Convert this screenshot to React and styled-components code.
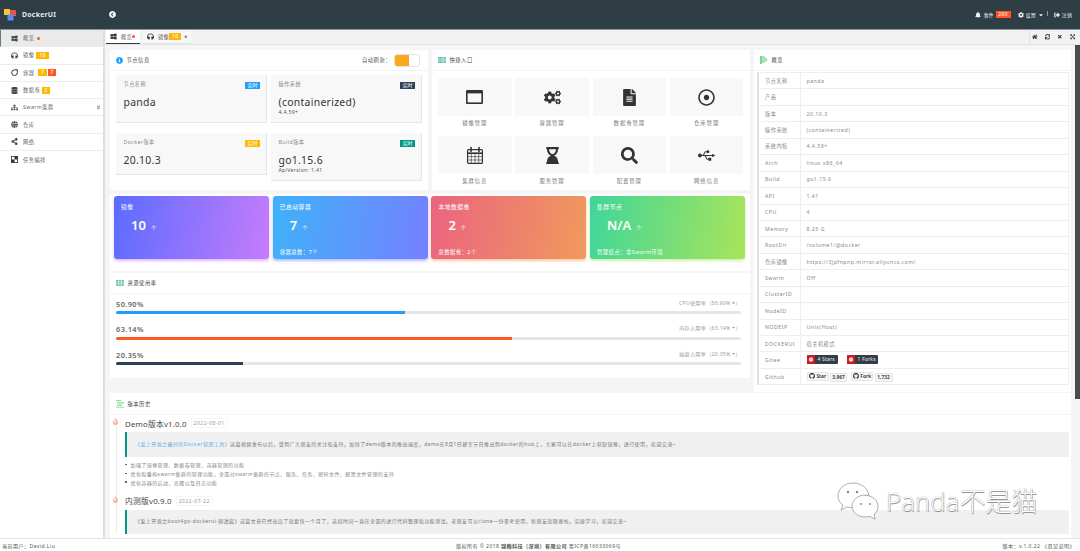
import React from "react";
import styled, { createGlobalStyle } from "styled-components";
import {
  FaWindows, FaHeadphones, FaDatabase, FaSitemap, FaGlobe, FaShareAlt, FaChevronCircleLeft, FaBell,
  FaCog, FaCaretDown, FaHome, FaSync, FaTimes, FaExpandArrowsAlt, FaInfoCircle,
  FaCogs, FaFileAlt, FaRegDotCircle, FaHourglassEnd, FaSearch, FaUsb, FaGithub,
  FaAngleDoubleDown, FaCaretUp, FaSignOutAlt, FaFire,
} from "react-icons/fa";

const FONT = `"Noto Sans", "Noto Sans CJK SC", sans-serif`;

const GlobalStyle = createGlobalStyle`
  html, body {
    margin: 0;
    padding: 0;
    height: 100%;
    overflow: hidden;
    background: #f5f5f5;
    font-family: ${FONT};
  }
  * { box-sizing: border-box; }
`;

const Page = styled.div`
  width: 1080px;
  height: 551px;
  display: flex;
  flex-direction: column;
  overflow: hidden;
  position: relative;
`;

const TopBar = styled.header`
  height: 30px;
  flex: none;
  background: #2f3d45;
  border-bottom: 1px solid #8b979c;
  display: flex;
  align-items: center;
  color: #fff;
`;
const Brand = styled.div`
  width: 109px;
  padding-left: 4px;
  display: flex;
  align-items: center;
  gap: 6px;
  font-size: 6.8px;
  font-weight: 700;
  letter-spacing: 0.3px;
  color: #e8ecee;
`;
const BackButton = styled.span`
  display: flex;
  font-size: 7px;
  color: #fff;
`;
const TopActions = styled.div`
  margin-left: auto;
  padding-right: 8px;
  display: flex;
  align-items: center;
  font-size: 5px;
  letter-spacing: 0.1px;
  color: #eef1f2;
`;
const TopAction = styled.span`
  display: flex;
  align-items: center;
  gap: 2px;
  margin-left: ${(p) => p.$gap || 0}px;
  svg { font-size: 6px; }
`;
const TopBadge = styled.span`
  background: #ff5722;
  color: #fff;
  width: 15px;
  text-align: center;
  line-height: 7px;
  height: 7px;
  font-size: 5px;
  letter-spacing: 0.4px;
`;
const TopSep = styled.span`
  width: 1px;
  height: 5px;
  background: #8b979c;
  margin: 0 5px 2px 3px;
`;

const Body = styled.div`
  flex: 1;
  min-height: 0;
  display: flex;
`;

const Sidebar = styled.nav`
  width: 105px;
  flex: none;
  background: #fff;
  border-right: 2px solid #dedede;
`;
const SideItem = styled.div`
  height: 17.3px;
  display: flex;
  align-items: center;
  padding-left: 10px;
  font-size: 5.2px;
  letter-spacing: 0.5px;
  color: #666;
  background: ${(p) => (p.$active ? "#e9eaea" : "#fff")};
  border-bottom: ${(p) => (p.$plain ? "none" : "1px solid #ececec")};
  border-left: 1px solid ${(p) => (p.$active ? "#6f7a80" : "transparent")};
`;
const SideIcon = styled.span`
  width: 12px;
  display: flex;
  font-size: 7px;
  color: #444;
`;
const Arrow = styled.span`
  margin-left: auto;
  margin-right: 2px;
  display: flex;
  font-size: 5px;
  color: #888;
`;
const Dot = styled.i`
  display: inline-block;
  width: 3px;
  height: 3px;
  border-radius: 50%;
  background: #ff5722;
  margin-left: ${(p) => p.$gap ?? 2}px;
`;
const Badge = styled.b`
  display: inline-block;
  font-weight: 500;
  font-size: 5px;
  line-height: 7px;
  height: 7px;
  padding: 0 ${(p) => (p.$wide ? 3 : 2.5)}px;
  margin-left: ${(p) => p.$gap ?? 2}px;
  color: #fff;
  background: ${(p) => p.$color || "#ffb800"};
`;

const Main = styled.div`
  flex: 1;
  min-width: 0;
  display: flex;
  flex-direction: column;
`;
const TabBar = styled.div`
  height: 15px;
  flex: none;
  background: #f2f2f2;
  border-bottom: 1px solid #e4e4e4;
  display: flex;
  align-items: flex-end;
  padding-left: 1px;
  gap: 3px;
`;
const Tab = styled.div`
  height: 14px;
  display: flex;
  align-items: center;
  padding: 0 ${(p) => (p.$active ? 5 : 3)}px 0 4px;
  font-size: 5.2px;
  letter-spacing: 0.3px;
  color: #666;
  background: ${(p) => (p.$active ? "#fff" : "#f7f7f7")};
  border-bottom: 1px solid ${(p) => (p.$active ? "#2f3d45" : "#e4e4e4")};
  svg { font-size: 7px; margin-right: 4px; color: #333; }
`;
const TabClose = styled.span`
  display: flex;
  margin-left: 3px;
  svg { font-size: 3.5px; margin: 0; color: #555; }
`;
const TabTools = styled.div`
  margin-left: auto;
  height: 100%;
  width: 51px;
  display: flex;
  align-items: center;
  justify-content: space-between;
  padding: 0 5px 0 2px;
  border-left: 1px solid #e2e2e2;
  font-size: 5.5px;
  color: #333;
`;

const ContentRow = styled.div`
  flex: 1;
  min-height: 0;
  display: flex;
`;
const Content = styled.div`
  flex: 1;
  min-width: 0;
  overflow: hidden;
  padding: 5px 4px 0 5px;
  background: #f5f5f5;
`;
const TrackBar = styled.div`
  width: 5px;
  flex: none;
  background: #f4f4f4;
`;
const Thumb = styled.div`
  height: 354px;
  background: #4c4c4c;
`;

const TopGrid = styled.div`
  display: grid;
  grid-template-columns: 640px 317px;
  column-gap: 4px;
  align-items: start;
`;
const LeftColumn = styled.div`
  display: flex;
  flex-direction: column;
  gap: 2px;
`;
const PanelPair = styled.div`
  display: grid;
  grid-template-columns: 318px 318px;
  gap: 4px;
  margin-bottom: 2px;
`;
const Panel = styled.section`
  background: #fff;
  height: ${(p) => p.$height}px;
  overflow: hidden;
`;
const PanelHead = styled.div`
  height: ${(p) => p.$height || 21}px;
  border-bottom: 1px solid #f4f4f4;
  padding: 0 6px;
  display: flex;
  align-items: center;
  gap: 3.5px;
  font-size: 5.3px;
  letter-spacing: 0.5px;
  color: #444;
`;
const HeadIcon = styled.span`
  display: flex;
  font-size: 7px;
  color: ${(p) => p.$color || "#5fc0ad"};
`;
const Refresh = styled.span`
  margin-left: auto;
  margin-right: 2px;
  display: flex;
  align-items: center;
  gap: 3px;
  color: #555;
`;
const Switch = styled.div`
  width: 26px;
  height: 13px;
  border: 1px solid #e3e3e3;
  border-radius: 3px;
  overflow: hidden;
  background: #fff;
  &::before {
    content: "";
    display: block;
    width: 14px;
    height: 100%;
    background: #fba81c;
  }
`;

const InfoGrid = styled.div`
  display: grid;
  grid-template-columns: 151px 151px;
  column-gap: 4px;
  row-gap: 9.5px;
  padding: 4px 6px 0;
  align-items: start;
`;
const InfoCard = styled.div`
  position: relative;
  height: ${(p) => p.$height}px;
  background: #f8f8f8;
  border-right: 1px solid #e5e5e5;
  border-bottom: 1px solid #e5e5e5;
  padding: 5px 7.5px;
`;
const InfoLabel = styled.div`
  font-size: 5.2px;
  line-height: 8px;
  letter-spacing: 0.45px;
  color: #888;
`;
const InfoValue = styled.div`
  margin-top: 7px;
  font-size: 10.4px;
  line-height: 14px;
  letter-spacing: 0.3px;
  color: #333;
`;
const InfoNote = styled.div`
  font-size: 5.2px;
  line-height: 6px;
  letter-spacing: 0.3px;
  color: #555;
`;
const Tag = styled.span`
  position: absolute;
  top: 7px;
  right: 6px;
  width: 15px;
  text-align: center;
  height: 7px;
  line-height: 7px;
  font-size: 5px;
  color: #fff;
  background: ${(p) => p.$color};
`;

const QuickGrid = styled.div`
  display: grid;
  grid-template-columns: repeat(4, 73.5px);
  column-gap: 3.8px;
  padding: 7px 6px 0;
`;
const QuickItem = styled.div`
  text-align: center;
  height: 58px;
`;
const QuickTile = styled.div`
  height: 38px;
  background: #f8f8f8;
  display: flex;
  align-items: center;
  justify-content: center;
  font-size: 17px;
  color: #333;
`;
const QuickLabel = styled.div`
  margin-top: 2px;
  font-size: 5.4px;
  line-height: 10px;
  letter-spacing: 0.9px;
  color: #777;
`;

const StatPanel = styled.div`
  background: #fff;
  height: 77px;
  padding: 2px 5px 0 4px;
  display: grid;
  grid-template-columns: repeat(4, 155px);
  column-gap: 3.7px;
`;
const StatCard = styled.div`
  height: 63px;
  border-radius: 3px;
  padding: 7px 7px 3px;
  color: #fff;
  display: flex;
  flex-direction: column;
  background: linear-gradient(100deg, ${(p) => p.$from}, ${(p) => p.$to});
  box-shadow: 0 2px 3px ${(p) => p.$to}88;
`;
const StatTitle = styled.div`
  font-size: 5.8px;
  line-height: 8px;
  letter-spacing: 0.5px;
`;
const StatValue = styled.div`
  margin: 5.5px 0 0 10px;
  display: flex;
  align-items: baseline;
  gap: 5px;
  font-size: 13px;
  line-height: 17px;
  font-weight: 600;
  small {
    font-size: 5.2px;
    font-weight: 400;
  }
`;
const StatNote = styled.div`
  margin-top: auto;
  font-size: 5.3px;
  line-height: 8px;
  letter-spacing: 0.5px;
`;

const UsageList = styled.div`
  padding: 2px 9px 0 6px;
`;
const UsageRow = styled.div`
  height: 25.5px;
`;
const UsageHead = styled.div`
  display: flex;
  justify-content: space-between;
  align-items: center;
  height: 15px;
`;
const UsagePct = styled.b`
  font-size: 7.4px;
  letter-spacing: 0.4px;
  font-weight: 600;
  color: #666;
`;
const UsageNote = styled.span`
  display: flex;
  align-items: center;
  margin-top: -3px;
  font-size: 5.1px;
  letter-spacing: 0.3px;
  color: #999;
  svg { font-size: 5px; }
`;
const UsageTrack = styled.div`
  height: 3px;
  border-radius: 2px;
  overflow: hidden;
  background: #e6e6e6;
`;
const UsageFill = styled.div`
  height: 100%;
  background: ${(p) => p.$color};
`;

const InfoTable = styled.table`
  width: 312px;
  margin: 1px 0 0 3px;
  border-collapse: collapse;
  border-left: 2px solid #e0e0e0;
  table-layout: fixed;
  td {
    height: 16.45px;
    padding: 0 0 0 6px;
    border: 1px solid #eeeeee;
    font-size: 5.2px;
    letter-spacing: 0.5px;
    color: #888;
    white-space: nowrap;
    overflow: hidden;
  }
  td:first-child { width: 42px; }
`;
const Shield = styled.span`
  display: inline-flex;
  align-items: center;
  width: 31px;
  height: 9px;
  margin-right: 9px;
  border-radius: 1px;
  overflow: hidden;
  font-size: 5px;
  color: #eee;
  background: #333d47;
  letter-spacing: 0.2px;
  &::before {
    content: "";
    width: 8px;
    height: 9px;
    margin-right: 3px;
    background: radial-gradient(circle, #f5c5c8 0 1.8px, #c71d23 2.6px);
  }
`;
const GhButton = styled.span`
  display: inline-flex;
  align-items: center;
  justify-content: center;
  gap: 1.5px;
  width: ${(p) => p.$width}px;
  height: 9px;
  margin-right: ${(p) => p.$gap ?? 1.5}px;
  border: 1px solid #e5e5e5;
  border-radius: 1px;
  background: #f6f6f6;
  font-size: 4.8px;
  font-weight: 700;
  color: #444;
  letter-spacing: 0;
  svg { font-size: 6px; color: #222; }
`;

const HistoryPanel = styled(Panel)`
  margin-top: 1px;
`;
const Timeline = styled.div`
  position: relative;
  padding: 0 2px 0 15px;
  &::before {
    content: "";
    position: absolute;
    left: 6px;
    top: 8px;
    bottom: 0;
    width: 1px;
    background: #ececec;
  }
`;
const Release = styled.div`
  position: relative;
  margin-bottom: ${(p) => p.$gap || 0}px;
`;
const FireMark = styled.span`
  position: absolute;
  left: -13px;
  top: 3px;
  display: flex;
  font-size: 7px;
  color: #fab5a4;
  background: #fff;
`;
const ReleaseHead = styled.div`
  height: 16px;
  display: flex;
  align-items: center;
  gap: 4px;
`;
const ReleaseName = styled.span`
  font-size: 7.8px;
  letter-spacing: 0.2px;
  color: #444;
`;
const ReleaseDate = styled.span`
  font-size: 5px;
  letter-spacing: 0.5px;
  color: #999;
  padding: 1px 2px;
  border: 1px solid #f6f6f6;
`;
const Quote = styled.div`
  margin-top: 1px;
  height: 24.5px;
  background: #f0f0f0;
  border-left: 2px solid #009688;
  padding: 0 8px 2px;
  display: flex;
  align-items: center;
  font-size: 5px;
  letter-spacing: 0.42px;
  color: #777;
  white-space: nowrap;
  a { color: #5fb0e8; }
`;
const Notes = styled.ul`
  margin: 3.5px 0 0;
  padding: 0;
  list-style: none;
  li {
    display: flex;
    align-items: center;
    gap: 4px;
    height: 8.9px;
    font-size: 5px;
    letter-spacing: 0.42px;
    color: #888;
  }
  li::before {
    content: "";
    width: 1.5px;
    height: 1.5px;
    background: #666;
  }
`;

const Footer = styled.footer`
  height: 13px;
  flex: none;
  background: #fff;
  border-top: 1px solid #e4e4e4;
  display: grid;
  grid-template-columns: 1fr auto 1fr;
  align-items: center;
  padding: 0 5px 0 2px;
  font-size: 5.1px;
  letter-spacing: 0.4px;
  color: #555;
`;
const FooterRight = styled.span`
  justify-self: end;
`;

const Watermark = styled.div`
  position: absolute;
  left: 837px;
  top: 482px;
  display: flex;
  align-items: center;
  gap: 7px;
  font-family: "Open Sans", "Noto Sans CJK SC", sans-serif;
  font-size: 26px;
  font-weight: 300;
  line-height: 38px;
  color: #fff;
  text-shadow: 0 0 1px #777, 0.5px 0.5px 0 #999;
  pointer-events: none;
`;

const LogoMark = () => (
  <svg width="12" height="12" viewBox="0 0 12 12">
    <rect x="0" y="0" width="6" height="6" fill="#f5c542" />
    <rect x="6" y="1" width="6" height="6" fill="#e25555" />
    <rect x="3.5" y="5.5" width="6" height="6" fill="#5b8def" />
  </svg>
);

const WeChat = () => (
  <svg width="42" height="38" viewBox="0 0 42 38" fill="#fff" stroke="#999" strokeWidth="0.8">
    <path d="M16 1C7 1 1 7 1 14c0 4 2 7 5 9l-2 5 6-3c2 .6 4 .8 6 .7 1-8 8-13 16-12C31 6 24 1 16 1z" />
    <path d="M28 13c-7 0-13 5-13 11s6 11 13 11c2 0 3-.2 5-.7l5 3-1-5c3-2 4-5 4-8 0-6-6-11-13-11z" />
    <circle cx="11" cy="10" r="1.2" fill="#888" stroke="none" />
    <circle cx="20" cy="10" r="1.2" fill="#888" stroke="none" />
    <circle cx="24" cy="22" r="1" fill="#888" stroke="none" />
    <circle cx="33" cy="22" r="1" fill="#888" stroke="none" />
  </svg>
);

const ListIcon = () => (
  <svg width="8" height="6" viewBox="0 0 8 6">
    <rect width="8" height="6" fill="#6cc5b4" />
    <path d="M0 2h8M0 4h8M5 0v6" stroke="#fff" strokeWidth="0.5" />
  </svg>
);
const TableIcon = () => (
  <svg width="8" height="6" viewBox="0 0 8 6">
    <rect width="8" height="6" fill="#6cc5b4" />
    <path d="M0 2h8M0 4h8M2.7 0v6M5.3 0v6" stroke="#fff" strokeWidth="0.5" />
  </svg>
);
const GreenIcon = () => (
  <svg width="8" height="8" viewBox="0 0 8 8">
    <path d="M0 0h4l4 4-4 3H0z" fill="#a6e6b4" />
    <path d="M0 0h2v8H0z" fill="#7bd893" />
  </svg>
);
const BarsIcon = () => (
  <svg width="8" height="8" viewBox="0 0 8 8" fill="#8fe09f">
    <rect x="0" y="0" width="5" height="1.3" />
    <rect x="1" y="2.2" width="7" height="1.3" />
    <rect x="1" y="4.4" width="5" height="1.3" />
    <rect x="0" y="6.6" width="8" height="1" />
  </svg>
);

const ContainerIcon = () => (
  <svg width="7" height="7" viewBox="0 0 7 7" fill="none" stroke="#333" strokeWidth="1">
    <path d="M6.3 .7v3a2.8 2.8 0 1 1-2.8-2.8z" />
  </svg>
);
const TaskIcon = () => (
  <svg width="7" height="7" viewBox="0 0 7 7">
    <rect x=".4" y=".4" width="6.2" height="6.2" fill="#fff" stroke="#333" strokeWidth=".8" />
    <rect x="3.5" y=".4" width="3.1" height="3.1" fill="#333" />
    <rect x=".4" y="3.5" width="3.1" height="3.1" fill="#333" />
  </svg>
);
const WindowIcon = () => (
  <svg width="17" height="14" viewBox="0 0 17 14">
    <rect x="0" y="0" width="17" height="14" rx="1.2" fill="#333" />
    <rect x="1.6" y="3.4" width="13.8" height="9" fill="#f8f8f8" />
  </svg>
);
const CalendarIcon = () => (
  <svg width="16" height="17" viewBox="0 0 16 17" fill="none" stroke="#333">
    <rect x=".6" y="2.6" width="14.8" height="13.8" rx="1" strokeWidth="1.2" />
    <path d="M.6 6.2h14.8" strokeWidth="1.6" />
    <path d="M.6 9.6h14.8M.6 13h14.8M4.3 6v10M8 6v10M11.7 6v10" strokeWidth=".6" />
    <path d="M4 .5v4M12 .5v4" strokeWidth="1.6" strokeLinecap="round" />
  </svg>
);

const sideItems = [
  { icon: <FaWindows />, label: "概览", active: true, extra: <Dot $gap={3} /> },
  { icon: <FaHeadphones />, label: "镜像", extra: <Badge $wide>10</Badge> },
  { icon: <ContainerIcon />, label: "容器", extra: <><Badge $gap={4}>7</Badge><Badge $gap={1} $color="#ff5722">7</Badge></> },
  { icon: <FaDatabase />, label: "数据卷", extra: <Badge>2</Badge> },
  { icon: <FaSitemap />, label: "Swarm集群", extra: <Arrow><FaAngleDoubleDown /></Arrow> },
  { icon: <FaGlobe />, label: "仓库" },
  { icon: <FaShareAlt />, label: "网络" },
  { icon: <TaskIcon />, label: "任务编排", plain: true },
];

const quickItems = [
  { icon: <WindowIcon />, label: "镜像管理" },
  { icon: <FaCogs />, label: "容器管理" },
  { icon: <FaFileAlt />, label: "数据卷管理" },
  { icon: <FaRegDotCircle />, label: "仓库管理" },
  { icon: <CalendarIcon />, label: "集群信息" },
  { icon: <FaHourglassEnd />, label: "服务管理" },
  { icon: <FaSearch />, label: "配置管理" },
  { icon: <FaUsb />, label: "网络信息" },
];

const stats = [
  { title: "镜像", value: "10", from: "#5b6cff", to: "#c57cfb" },
  { title: "已启动容器", value: "7", note: "容器总数：7个", from: "#3fb2f9", to: "#7580ff" },
  { title: "本地数据卷", value: "2", note: "总数据卷：2个", from: "#ea6480", to: "#f09a5c" },
  { title: "集群节点", value: "N/A", note: "管理结点：非Swarm环境", from: "#3fd69a", to: "#a9e45a" },
];

const usage = [
  { pct: "50.90%", note: "CPU使用率（50.90%", width: 46.2, color: "#1e9fff", up: true },
  { pct: "63.14%", note: "内存占用率（63.14%", width: 63.4, color: "#ff5722" },
  { pct: "20.35%", note: "磁盘占用率（20.35%", width: 20.3, color: "#2f3f55" },
];

const overview = [
  ["节点名称", "panda"], ["产品", ""], ["版本", "20.10.3"], ["操作系统", "(containerized)"],
  ["系统内核", "4.4.59+"], ["Arch", "linux x86_64"], ["Build", "go1.15.6"], ["API", "1.41"],
  ["CPU", "4"], ["Memory", "8.25 G"], ["RootDir", "/volume1/@docker"],
  ["仓库镜像", "https://3jpfnpnp.mirror.aliyuncs.com/"], ["Swarm", "Off"], ["ClusterID", ""],
  ["NodeID", ""], ["NODEIP", "Unix(Host)"], ["DOCKERUI", "宿主机模式"],
];

export default function App() {
  return (
    <Page>
      <GlobalStyle />
      <TopBar>
        <Brand><LogoMark />DockerUI</Brand>
        <BackButton><FaChevronCircleLeft /></BackButton>
        <TopActions>
          <TopAction><FaBell />事件<TopBadge>260</TopBadge></TopAction>
          <TopAction $gap={7}><FaCog />设置<FaCaretDown /></TopAction>
          <TopSep />
          <TopAction $gap={1}><FaSignOutAlt />注销</TopAction>
        </TopActions>
      </TopBar>

      <Body>
        <Sidebar>
          {sideItems.map((item) => (
            <SideItem key={item.label} $active={item.active} $plain={item.plain}>
              <SideIcon>{item.icon}</SideIcon>
              {item.label}
              {item.extra}
            </SideItem>
          ))}
        </Sidebar>

        <Main>
          <TabBar>
            <Tab $active><FaWindows />概览<Dot $gap={0} /></Tab>
            <Tab><FaHeadphones />镜像<Badge $wide $gap={0}>10</Badge><TabClose><FaTimes /></TabClose></Tab>
            <TabTools><FaHome /><FaSync /><FaTimes /><FaExpandArrowsAlt /></TabTools>
          </TabBar>

          <ContentRow>
            <Content>
              <TopGrid>
                <LeftColumn>
                  <PanelPair>
                    <Panel $height={140}>
                      <PanelHead>
                        <HeadIcon $color="#1e9fff"><FaInfoCircle /></HeadIcon>
                        节点信息
                        <Refresh>自动刷新：<Switch /></Refresh>
                      </PanelHead>
                      <InfoGrid>
                        <InfoCard $height={48}>
                          <InfoLabel>节点名称</InfoLabel>
                          <Tag $color="#1e9fff">实时</Tag>
                          <InfoValue>panda</InfoValue>
                        </InfoCard>
                        <InfoCard $height={48}>
                          <InfoLabel>操作系统</InfoLabel>
                          <Tag $color="#2f4056">实时</Tag>
                          <InfoValue>(containerized)</InfoValue>
                          <InfoNote>4.4.59+</InfoNote>
                        </InfoCard>
                        <InfoCard $height={42}>
                          <InfoLabel>Docker版本</InfoLabel>
                          <Tag $color="#ffb800">实时</Tag>
                          <InfoValue>20.10.3</InfoValue>
                        </InfoCard>
                        <InfoCard $height={48}>
                          <InfoLabel>Build版本</InfoLabel>
                          <Tag $color="#009688">实时</Tag>
                          <InfoValue>go1.15.6</InfoValue>
                          <InfoNote>ApiVersion: 1.41</InfoNote>
                        </InfoCard>
                      </InfoGrid>
                    </Panel>
                    <Panel $height={140}>
                      <PanelHead>
                        <HeadIcon><ListIcon /></HeadIcon>
                        快捷入口
                      </PanelHead>
                      <QuickGrid>
                        {quickItems.map((item) => (
                          <QuickItem key={item.label}>
                            <QuickTile>{item.icon}</QuickTile>
                            <QuickLabel>{item.label}</QuickLabel>
                          </QuickItem>
                        ))}
                      </QuickGrid>
                    </Panel>
                  </PanelPair>

                  <StatPanel>
                    {stats.map((s) => (
                      <StatCard key={s.title} $from={s.from} $to={s.to}>
                        <StatTitle>{s.title}</StatTitle>
                        <StatValue>{s.value}<small>个</small></StatValue>
                        {s.note && <StatNote>{s.note}</StatNote>}
                      </StatCard>
                    ))}
                  </StatPanel>

                  <Panel $height={105}>
                    <PanelHead>
                      <HeadIcon><TableIcon /></HeadIcon>
                      资源使用率
                    </PanelHead>
                    <UsageList>
                      {usage.map((u) => (
                        <UsageRow key={u.pct}>
                          <UsageHead>
                            <UsagePct>{u.pct}</UsagePct>
                            <UsageNote>
                              {u.note}
                              {u.up ? <FaCaretUp /> : <FaCaretDown />}）
                            </UsageNote>
                          </UsageHead>
                          <UsageTrack>
                            <UsageFill $color={u.color} style={{ width: `${u.width}%` }} />
                          </UsageTrack>
                        </UsageRow>
                      ))}
                    </UsageList>
                  </Panel>
                </LeftColumn>

                <Panel $height={342}>
                  <PanelHead>
                    <HeadIcon><GreenIcon /></HeadIcon>
                    概览
                  </PanelHead>
                  <InfoTable>
                    <tbody>
                      {overview.map(([k, v]) => (
                        <tr key={k}><td>{k}</td><td>{v}</td></tr>
                      ))}
                      <tr>
                        <td>Gitee</td>
                        <td>
                          <Shield>4 Stars</Shield>
                          <Shield>1 Forks</Shield>
                        </td>
                      </tr>
                      <tr>
                        <td>Github</td>
                        <td>
                          <GhButton $width={22}><FaGithub />Star</GhButton>
                          <GhButton $width={17} $gap={4}>3,967</GhButton>
                          <GhButton $width={22}><FaGithub />Fork</GhButton>
                          <GhButton $width={18}>1,732</GhButton>
                        </td>
                      </tr>
                    </tbody>
                  </InfoTable>
                </Panel>
              </TopGrid>

              <HistoryPanel $height={150}>
                <PanelHead $height={22}>
                  <HeadIcon><BarsIcon /></HeadIcon>
                  版本历史
                </PanelHead>
                <Timeline>
                  <Release $gap={6}>
                    <FireMark><FaFire /></FireMark>
                    <ReleaseHead>
                      <ReleaseName>Demo版本v1.0.0</ReleaseName>
                      <ReleaseDate>2022-08-01</ReleaseDate>
                    </ReleaseHead>
                    <Quote>
                      <a>《爱上开源之最好的Docker管理工具》</a>这篇视频发布以后，受到广大朋友的关注和支持，加快了demo版本的推出速度，demo在8月1日建军节日推出到docker的hub上，大家可以在docker上获取镜像，进行使用，欢迎交流~
                    </Quote>
                    <Notes>
                      <li>加强了镜像管理、数据卷管理、容器管理的功能</li>
                      <li>优化和重构swarm集群的管理功能，全面对swarm集群的节点、服务、任务、密码文件、配置文件管理的支持</li>
                      <li>优化容器的启动、克隆以及日志功能</li>
                    </Notes>
                  </Release>
                  <Release>
                    <FireMark><FaFire /></FireMark>
                    <ReleaseHead>
                      <ReleaseName>内测版v0.9.0</ReleaseName>
                      <ReleaseDate>2022-07-22</ReleaseDate>
                    </ReleaseHead>
                    <Quote>
                      《爱上开源之boot4go-dockerui-剧透篇》这篇文章已经出品了就要快一个月了，这段时间一直在全面的进行代码整理和功能测试。老朋友可以clone一份参考使用，新朋友就随意啦。实操学习，欢迎交流~
                    </Quote>
                  </Release>
                </Timeline>
              </HistoryPanel>
            </Content>
            <TrackBar><Thumb /></TrackBar>
          </ContentRow>
        </Main>
      </Body>

      <Footer>
        <span>当前用户：David.Liu</span>
        <span>版权所有 © 2018 <b>锦翰科技（深圳）有限公司</b> 粤ICP备16033069号</span>
        <FooterRight>版本：v.1.0.22 《悬赏说明》</FooterRight>
      </Footer>

      <Watermark><WeChat />Panda不是猫</Watermark>
    </Page>
  );
}
